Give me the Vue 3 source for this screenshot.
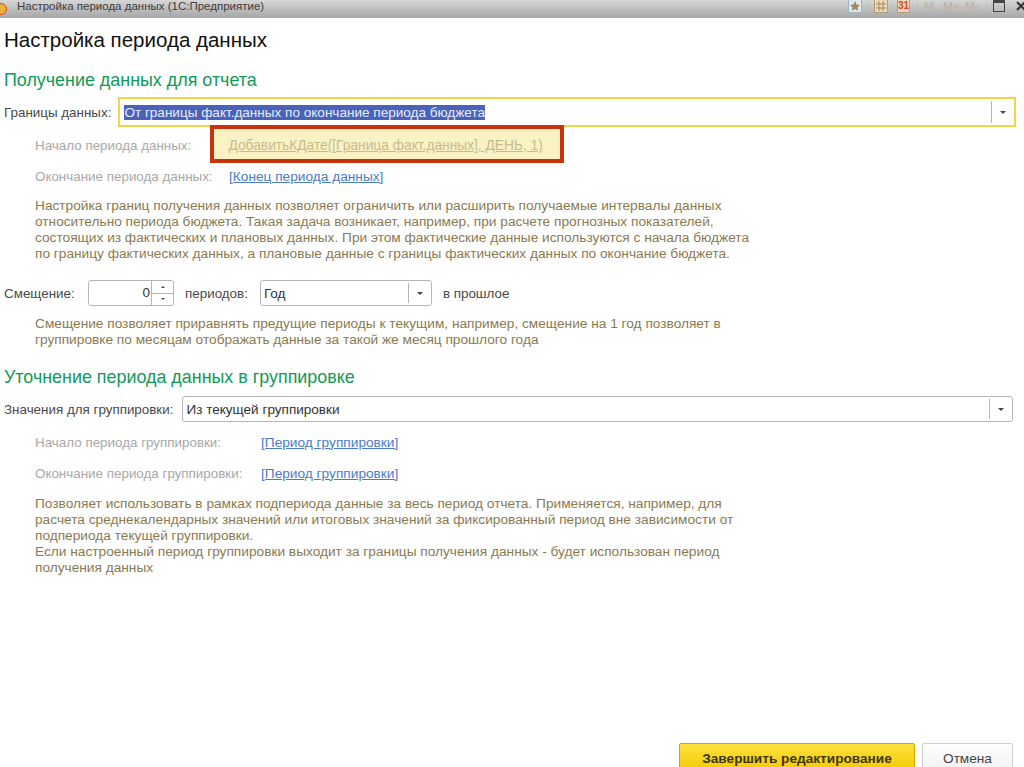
<template>
    <div class="window">
        <div class="title-bar">
            <div class="app-dot"></div>
            <span class="title-text">Настройка периода данных (1С:Предприятие)</span>
            <div class="title-tools">
                <svg class="star-icon" width="14" height="14" viewBox="0 0 14 14">
                    <rect x="0.5" y="0.5" width="13" height="13" fill="#dfe8ee" stroke="#9db4c4" />
                    <path d="M7 2 L8.5 5.5 L12 6 L9.5 8.3 L10.2 12 L7 10 L3.8 12 L4.5 8.3 L2 6 L5.5 5.5 Z" fill="#a08a5a" />
                </svg>
                <span class="sep sep-a"></span>
                <svg class="grid-icon" width="14" height="14" viewBox="0 0 14 14">
                    <rect x="0.5" y="0.5" width="13" height="13" fill="#ead9b8" stroke="#b59b74" />
                    <path d="M5 2 V12 M9 2 V12 M2 5 H12 M2 9 H12" stroke="#a58a5c" fill="none" />
                </svg>
                <span class="sep sep-b"></span>
                <span class="cal">31</span>
                <span class="sep sep-c"></span>
                <span class="mem mem-m">M</span>
                <span class="mem mem-plus">M+</span>
                <span class="mem mem-minus">M-</span>
                <span class="sep sep-d"></span>
                <svg class="win-icon" width="12" height="12" viewBox="0 0 12 12">
                    <rect x="0.5" y="0.5" width="11" height="11" fill="none" stroke="#444" />
                    <rect x="0.5" y="0.5" width="11" height="2.5" fill="#444" />
                </svg>
                <svg class="close-icon" width="10" height="10" viewBox="0 0 10 10">
                    <path d="M1 1 L9 9 M9 1 L1 9" stroke="#333" stroke-width="2" />
                </svg>
            </div>
        </div>

        <div class="content">
            <h1 class="page-title">Настройка периода данных</h1>

            <h2 class="section-title first">Получение данных для отчета</h2>

            <div class="form-row bounds-row">
                <label class="label">Границы данных:</label>
                <div class="select active grow">
                    <span class="value"><span class="selected">От границы факт.данных по окончание периода бюджета</span></span>
                    <span class="arrow-box"><i class="arrow"></i></span>
                </div>
            </div>

            <div class="indent start-row">
                <span class="dim-label">Начало периода данных:</span>
                <div class="highlight">
                    <a class="formula">ДобавитьКДате([Граница факт.данных], ДЕНЬ, 1)</a>
                </div>
            </div>

            <div class="indent end-row">
                <span class="dim-label">Окончание периода данных:</span>
                <a class="link">[Конец периода данных]</a>
            </div>

            <p class="hint first-hint">
                Настройка границ получения данных позволяет ограничить или расширить получаемые интервалы данных<br />
                относительно периода бюджета. Такая задача возникает, например, при расчете прогнозных показателей,<br />
                состоящих из фактических и плановых данных. При этом фактические данные используются с начала бюджета<br />
                по границу фактических данных, а плановые данные с границы фактических данных по окончание бюджета.
            </p>

            <div class="form-row offset-row">
                <label class="label offset-label">Смещение:</label>
                <div class="spin">
                    <span class="spin-value">0</span>
                    <span class="spin-btns">
                        <span class="spin-btn"><i class="arrow up"></i></span>
                        <span class="spin-btn"><i class="arrow"></i></span>
                    </span>
                </div>
                <label class="label periods-label">периодов:</label>
                <div class="select year">
                    <span class="value">Год</span>
                    <span class="arrow-box"><i class="arrow"></i></span>
                </div>
                <span class="label past-label">в прошлое</span>
            </div>

            <p class="hint offset-hint">
                Смещение позволяет приравнять предущие периоды к текущим, например, смещение на 1 год позволяет в<br />
                группировке по месяцам отображать данные за такой же месяц прошлого года
            </p>

            <h2 class="section-title second">Уточнение периода данных в группировке</h2>

            <div class="form-row group-row">
                <label class="label group-label">Значения для группировки:</label>
                <div class="select grow">
                    <span class="value">Из текущей группировки</span>
                    <span class="arrow-box"><i class="arrow"></i></span>
                </div>
            </div>

            <div class="indent group-start">
                <span class="dim-label wide">Начало периода группировки:</span>
                <a class="link">[Период группировки]</a>
            </div>
            <div class="indent group-end">
                <span class="dim-label wide">Окончание периода группировки:</span>
                <a class="link">[Период группировки]</a>
            </div>

            <p class="hint group-hint">
                Позволяет использовать в рамках подпериода данные за весь период отчета. Применяется, например, для<br />
                расчета среднекалендарных значений или итоговых значений за фиксированный период вне зависимости от<br />
                подпериода текущей группировки.<br />
                Если настроенный период группировки выходит за границы получения данных - будет использован период<br />
                получения данных
            </p>
        </div>

        <div class="footer">
            <button class="finish-button">Завершить редактирование</button>
            <button class="cancel-button">Отмена</button>
        </div>
    </div>
</template>

<script setup>
</script>

<style>
html, body {
    margin: 0;
    background: #fff;
}
</style>

<style scoped>
.window {
    width: 1024px;
    height: 767px;
    overflow: hidden;
    display: flex;
    flex-direction: column;
    background: #fff;
    font-family: "Liberation Sans", Arial, sans-serif;
    font-size: 13.4px;
    color: #4a4a4a;
}
.title-bar {
    height: 18px;
    flex: none;
    display: flex;
    align-items: center;
    overflow: hidden;
    background: linear-gradient(#d6d6d6, #a6a6a6);
}
.app-dot {
    width: 10px;
    height: 10px;
    margin-left: -5px;
    border-radius: 50%;
    background: #e9b23c;
    border: 1px solid #c8502c;
    flex: none;
}
.title-text {
    margin-left: 10px;
    margin-top: -6px;
    line-height: 12px;
    color: #3c3c3c;
    font-size: 11.5px;
}
.title-tools {
    margin-left: auto;
    margin-right: -2px;
    margin-top: -7px;
    display: flex;
    align-items: center;
    flex: none;
}
.sep {
    width: 1px;
    height: 12px;
    background: #c4c4c4;
}
.sep-a { margin-left: 6px; }
.sep-b { margin-left: 4px; }
.sep-c { margin-left: 7px; }
.sep-d { margin-left: 5px; }
.grid-icon { margin-left: 5px; }
.cal {
    box-sizing: border-box;
    width: 13px;
    height: 14px;
    margin-left: 4px;
    background: #eed5c0;
    border: 1px solid #b89a80;
    color: #d24a20;
    font-size: 10px;
    font-weight: bold;
    line-height: 12px;
    text-align: center;
}
.mem {
    color: #c2b6aa;
    font-size: 12px;
    line-height: 14px;
    margin-top: 3px;
    font-weight: bold;
    flex: none;
}
.mem-m { margin-left: 6px; width: 10px; }
.mem-plus { margin-left: 9px; width: 17px; }
.mem-minus { margin-left: 5px; width: 16px; }
.win-icon { margin-left: 6px; }
.close-icon { margin-left: 11px; }
.content {
    flex: 1;
    padding: 0 8px 0 4px;
}
.page-title {
    margin: 10px 0 0;
    font-size: 20.5px;
    line-height: 24px;
    font-weight: normal;
    color: #111;
}
.section-title {
    margin: 0;
    font-size: 17.9px;
    line-height: 22px;
    font-weight: normal;
    color: #0f9a58;
}
.section-title.first {
    margin-top: 17px;
}
.section-title.second {
    margin-top: 18px;
}
.form-row {
    display: flex;
    align-items: center;
}
.bounds-row {
    margin-top: 6px;
    height: 30px;
}
.group-row {
    margin-top: 8px;
    height: 26px;
    margin-right: 3px;
}
.offset-row {
    margin-top: 18px;
    height: 26px;
}
.label {
    color: #4a4a4a;
    margin-right: 7px;
    white-space: nowrap;
}
.group-label {
    margin-right: 9px;
}
.offset-label {
    width: 84px;
    margin-right: 0;
}
.periods-label {
    margin: 0 12px 0 11px;
}
.past-label {
    margin: 0 0 0 11px;
}
.select {
    display: flex;
    align-items: center;
    height: 100%;
    box-sizing: border-box;
    border: 1px solid #b5b5b5;
    border-radius: 3px;
    background: #fff;
}
.grow {
    flex: 1;
}
.select.active {
    border: 2px solid #f5d547;
    border-radius: 0;
}
.select.year {
    width: 172px;
}
.value {
    flex: 1;
    padding-left: 3px;
    color: #333;
    font-size: 13.55px;
}
.select.active .value {
    padding-left: 4px;
}
.selected {
    background: #4a63b8;
    color: #e8ecf8;
}
.arrow-box {
    width: 22px;
    height: calc(100% - 4px);
    border-left: 1px solid #b5b5b5;
    display: flex;
    align-items: center;
    justify-content: center;
}
.arrow {
    width: 0;
    height: 0;
    border-left: 3.5px solid transparent;
    border-right: 3.5px solid transparent;
    border-top: 3.5px solid #444;
}
.arrow.up {
    border-top: 0;
    border-bottom: 3.5px solid #444;
}
.indent {
    display: flex;
    align-items: center;
    margin-left: 31px;
    height: 20px;
}
.dim-label {
    width: 175px;
    color: #a8a8a8;
    white-space: nowrap;
}
.dim-label.wide {
    width: 226px;
}
.start-row {
    height: 38px;
    margin-top: -2px;
}
.start-row .dim-label {
    padding-top: 3px;
}
.end-row {
    margin-top: 3px;
}
.highlight {
    box-sizing: border-box;
    width: 354px;
    height: 38px;
    display: flex;
    align-items: center;
    padding: 3px 0 0 14.5px;
    border: 4.5px solid #c8330c;
    background: #fbf2c4;
}
.formula {
    color: #c4bc90;
    font-size: 13.75px;
    text-decoration: underline;
}
.link {
    color: #4a7cc4;
    font-size: 13.7px;
    text-decoration: underline;
}
.end-row .dim-label {
    width: 194px;
}
.hint {
    margin: 0 0 0 31px;
    font-size: 13.7px;
    line-height: 16px;
    color: #8a7a50;
}
.first-hint {
    margin-top: 12px;
}
.offset-hint {
    margin-top: 10px;
}
.group-start {
    margin-top: 10px;
}
.group-end {
    margin-top: 11px;
}
.group-hint {
    margin-top: 12.5px;
}
.spin {
    box-sizing: border-box;
    width: 86px;
    height: 100%;
    display: flex;
    border: 1px solid #b5b5b5;
    border-radius: 3px;
}
.spin-value {
    flex: 1;
    text-align: right;
    line-height: 24px;
    padding-right: 1px;
    color: #333;
    font-size: 13.55px;
}
.spin-btns {
    width: 21px;
    display: flex;
    flex-direction: column;
    border-left: 1px solid #b5b5b5;
}
.spin-btn {
    flex: 1;
    display: flex;
    align-items: center;
    justify-content: center;
}
.spin-btn .arrow {
    border-left-width: 2px;
    border-right-width: 2px;
    border-top-width: 2px;
    border-bottom-width: 0;
}
.spin-btn .arrow.up {
    border-top-width: 0;
    border-bottom-width: 2px;
}
.spin-btn + .spin-btn {
    border-top: 1px solid #b5b5b5;
}
.footer {
    flex: none;
    display: flex;
    justify-content: flex-end;
    gap: 7px;
    padding-right: 11px;
    height: 24px;
}
.finish-button {
    width: 236px;
    height: 30px;
    border: 1px solid #c9a800;
    border-radius: 2px;
    background: linear-gradient(#fbe23c, #f5c800);
    color: #3c3410;
    font-family: inherit;
    font-size: 13.65px;
    font-weight: bold;
}
.cancel-button {
    width: 91px;
    height: 30px;
    border: 1px solid #cfcfcf;
    border-radius: 2px;
    background: linear-gradient(#fff, #f1f1f1);
    color: #444;
    font-family: inherit;
    font-size: 13.65px;
}
</style>
